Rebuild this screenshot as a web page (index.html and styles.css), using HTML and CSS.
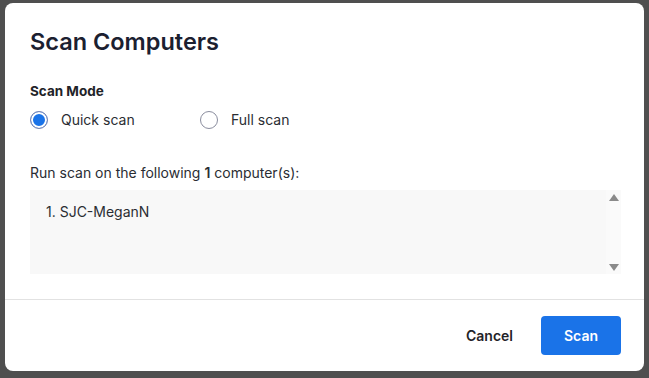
FILE: index.html
```
<!DOCTYPE html>
<html lang="en">
<head>
  <meta charset="UTF-8">
  <title>Scan Computers</title>
  <link rel="stylesheet" href="styles.css">
</head>
<body>
  <div class="modal">
    <div class="modal-body">
      <h1 class="modal-title">Scan Computers</h1>

      <div class="field-label">Scan Mode</div>
      <div class="radio-row">
        <label class="radio">
          <span class="radio-dot checked"></span>
          Quick scan
        </label>
        <label class="radio">
          <span class="radio-dot"></span>
          Full scan
        </label>
      </div>

      <p class="target-text">Run scan on the following <b>1</b> computer(s):</p>
      <div class="target-box">
        <div class="target-list">1. SJC-MeganN</div>
        <div class="scrollbar">
          <span class="arrow up"></span>
          <span class="arrow down"></span>
        </div>
      </div>
    </div>

    <div class="modal-footer">
      <button class="btn-cancel">Cancel</button>
      <button class="btn-primary">Scan</button>
    </div>
  </div>
</body>
</html>
```

FILE: styles.css
```
body {
  margin: 0;
  background: #4f4f4f;
  font-family: Inter, 'Noto Sans', sans-serif;
  color: #1f2328;
  height: 378px;
  overflow: hidden;
}

/* Dialog */
.modal {
  margin: 3px 0 0 5px;
  width: 639px;
  height: 368px;
  background: #fff;
  border-radius: 8px;
  display: flex;
  flex-direction: column;
}

.modal-body {
  padding: 24px 23px 0 25px;
  flex: 1;
}

.modal-title {
  margin: 0;
  font-size: 23.5px;
  line-height: 30px;
  font-weight: 600;
  color: #1b2030;
}

.field-label {
  margin-top: 26px;
  font-size: 13.5px;
  font-weight: 700;
  line-height: 16px;
}

/* Radios */
.radio-row {
  display: flex;
  margin-top: 11px;
}

.radio {
  display: flex;
  align-items: center;
  gap: 13px;
  width: 170px;
  font-size: 14px;
  line-height: 20px;
  color: #2a2d33;
}

.radio-dot {
  box-sizing: border-box;
  width: 18px;
  height: 18px;
  border: 1px solid #8a8d9e;
  border-radius: 50%;
  background: #fff;
}

.radio-dot.checked {
  border-color: #7d86b0;
  background: #1a73e8;
  box-shadow: inset 0 0 0 2px #fff;
}

/* Target list */
.target-text {
  margin: 33px 0 0;
  font-size: 14px;
  line-height: 20px;
  color: #2a2d33;
}

.target-text b {
  font-weight: 600;
}

.target-box {
  margin-top: 7px;
  height: 84px;
  background: #f8f8f8;
  display: flex;
}

.target-list {
  flex: 1;
  padding: 12px 16px;
  font-size: 14px;
  line-height: 20px;
  color: #2a2d33;
}

.scrollbar {
  width: 15px;
  background: #fafafa;
  position: relative;
}

.arrow {
  position: absolute;
  left: 3px;
  width: 0;
  height: 0;
  border-left: 5px solid transparent;
  border-right: 5px solid transparent;
}

.arrow.up {
  top: 4px;
  border-bottom: 7px solid #8a8a8a;
}

.arrow.down {
  bottom: 3px;
  border-top: 7px solid #8a8a8a;
}

/* Footer */
.modal-footer {
  border-top: 1px solid #e2e2e2;
  height: 71px;
  display: flex;
  justify-content: flex-end;
  align-items: center;
  padding: 0 23px 0 0;
  gap: 28px;
}

.btn-cancel {
  border: none;
  background: none;
  font-family: inherit;
  font-size: 14px;
  font-weight: 600;
  color: #1f2328;
  padding: 0;
}

.btn-primary {
  border: none;
  background: #1a73e8;
  color: #fff;
  font-family: inherit;
  font-size: 14px;
  font-weight: 600;
  width: 80px;
  height: 39px;
  border-radius: 4px;
}
```
